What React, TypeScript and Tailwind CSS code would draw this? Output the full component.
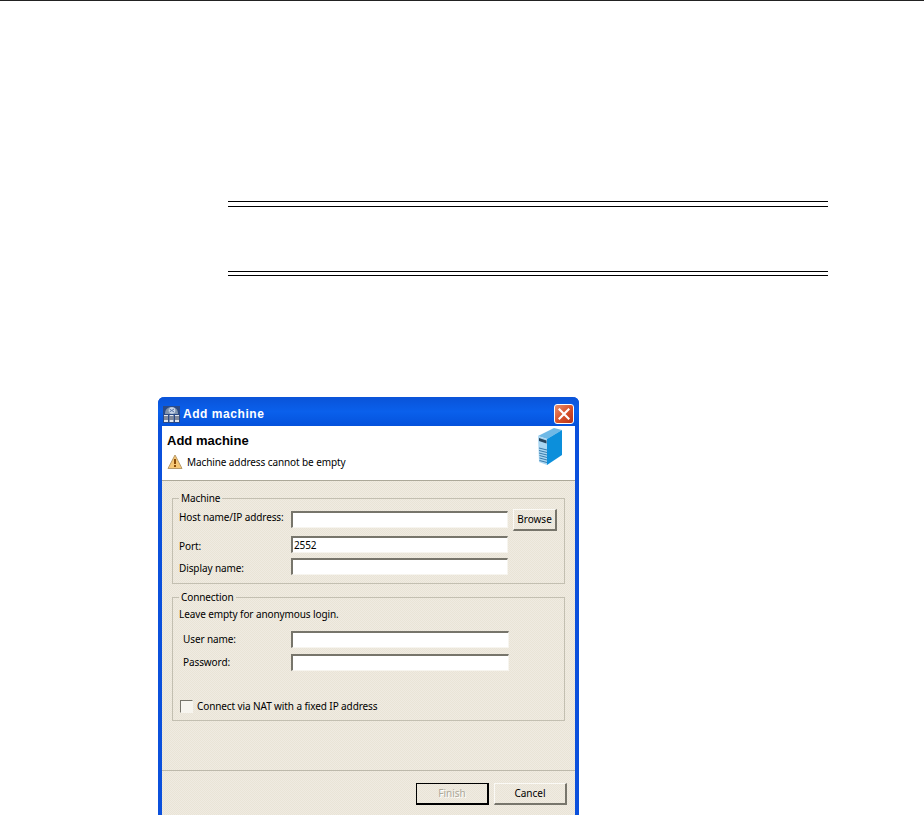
import React from "react";

const txt = "whitespace-nowrap text-[10px] tracking-[-0.1px] leading-[14px] text-black";

function AppIcon() {
  return (
    <svg width="17" height="17" viewBox="0 0 17 17">
      <rect x="0" y="0" width="17" height="17" fill="#2b4a86" />
      <path d="M2 8 C2 3 5 1 8.500 1 C12 1 15 3 15 8 Z" fill="#7f93ad" />
      <circle cx="9" cy="4.500" r="3.300" fill="#c9d6ea" />
      <path d="M6.500 3 L11 6 M11 3 L6.500 6" stroke="#5a76a8" strokeWidth="1" />
      <rect x="1" y="9" width="4" height="7" fill="#e4e8ef" />
      <rect x="6.500" y="9" width="4" height="7" fill="#e4e8ef" />
      <rect x="12" y="9" width="4" height="7" fill="#e4e8ef" />
      <path d="M1 11 H5 M1 13 H5 M6.500 11 H10.500 M6.500 13 H10.500 M12 11 H16 M12 13 H16" stroke="#1f2a44" strokeWidth="1" />
    </svg>
  );
}

function CloseIcon() {
  return (
    <div className="flex h-[20px] w-[20px] items-center justify-center rounded-[3px] border border-white bg-gradient-to-br from-[#e8906f] via-[#d9532b] to-[#b5321a]">
      <svg width="12" height="12" viewBox="0 0 12 12">
        <path d="M1.500 1.500 L10.500 10.500 M10.500 1.500 L1.500 10.500" stroke="#ffffff" strokeWidth="2.200" strokeLinecap="square" />
      </svg>
    </div>
  );
}

function WarningIcon() {
  return (
    <svg width="16" height="16" viewBox="0 0 16 16">
      <path d="M8 1 L15 14.500 H1 Z" fill="#f6c877" stroke="#b79a6a" strokeWidth="1" strokeLinejoin="round" />
      <path d="M8 5 V10" stroke="#8a4b08" strokeWidth="2" />
      <rect x="7" y="11" width="2" height="2" fill="#8a4b08" />
    </svg>
  );
}

function ServerIcon() {
  return (
    <svg width="25" height="37" viewBox="0 0 25 37">
      <path d="M0 8 L16 0 L24 2 L9 11 Z" fill="#6fb9e6" />
      <path d="M0 8 L9 11 L9 37 L1 34 Z" fill="#a9d6f2" />
      <path d="M9 11 L24 2 L24 27 L9 37 Z" fill="#0c8fdb" />
      <path d="M1 10 L8.500 12.500 L8.500 15.500 L1 13 Z" fill="#27465f" />
      <path d="M1 20 L9 22 M1 22.500 L9 24.500 M1 25 L9 27 M1.500 27.500 L9 29.500 M1.500 30 L9 32 M1.500 32.500 L9 34.500" stroke="#3a7cab" strokeWidth="1" />
    </svg>
  );
}

function Field({ value = "", className = "w-[217px]" }: { value?: string; className?: string }) {
  return (
    <div className={`box-border h-[17px] border-t-2 border-l-2 border-r border-b border-t-[#77756b] border-l-[#77756b] border-r-[#f7f5ef] border-b-[#f7f5ef] bg-white pl-px ${txt} ${className}`}>
      {value}
    </div>
  );
}

function Btn({ children, def }: { children: React.ReactNode; def?: boolean }) {
  return (
    <div
      className={`box-border flex h-[22px] w-[73px] items-center justify-center border text-[10px] ${
        def
          ? "border-black border-r-2 border-b-2 text-[#aca899] [text-shadow:1px_1px_0_#fff]"
          : "border-t-[#fbfaf6] border-l-[#fbfaf6] border-r-[#77756b] border-b-[#77756b] border-r-2 border-b-2 text-black"
      }`}
    >
      {children}
    </div>
  );
}

export default function App() {
  return (
    <div className="h-[815px] w-[924px] overflow-hidden bg-white font-['Noto_Sans','Liberation_Sans',Arial,sans-serif]">
      <div className="h-px bg-[#222222]" />

      <div className="ml-[228px] mt-[200px] w-[600px]">
        <div className="h-px bg-black" />
        <div className="mt-1 h-px bg-black" />
        <div className="mt-[64px] h-px bg-black" />
        <div className="mt-[3px] h-px bg-black" />
      </div>

      <div className="ml-[158px] mt-[121px] box-border h-[440px] w-[421px] rounded-t-[6px] border-x-[4px] border-[#0b50dc] border-t-0 bg-[#ece7dc] bg-[repeating-conic-gradient(#e9e4d6_0_25%,#f0ebe2_0_50%)] bg-[length:2px_2px]">
        <div className="-mx-[4px] box-border flex h-[29px] items-center rounded-t-[6px] bg-gradient-to-b from-[#0a53d8] via-[#0a60ec] to-[#0552dc] pl-[5px] pr-[5px] pt-[5px]">
          <AppIcon />
          <span className="ml-[3px] font-['Liberation_Sans',Arial,sans-serif] text-[12px] font-bold tracking-[0.55px] text-white">Add machine</span>
          <div className="ml-auto">
            <CloseIcon />
          </div>
        </div>

        <div className="relative box-border h-[55px] border-b border-b-[#aca899] bg-white pl-[5px] pt-[7px]">
          <div className="font-['Liberation_Sans',Arial,sans-serif] text-[13px] font-bold leading-[15px] text-black">Add machine</div>
          <div className="mt-[6px] flex items-center">
            <WarningIcon />
            <span className={`ml-[4px] ${txt}`}>Machine address cannot be empty</span>
          </div>
          <div className="absolute right-[12px] top-[2px]">
            <ServerIcon />
          </div>
        </div>

        <fieldset className="mx-[10px] mt-[10px] box-border h-[93px] w-[393px] border border-[#c3bfb1] pl-[6px]">
          <legend className={`px-[2px] ${txt} leading-[12px]`}>Machine</legend>
          <div className="mt-[6px] flex">
            <span className={`-mt-px w-[112px] ${txt}`}>Host name/IP address:</span>
            <Field />
            <div className="-mt-[2px] ml-[5px] box-border flex h-[22px] w-[44px] items-center justify-center border border-t-[#fbfaf6] border-l-[#fbfaf6] border-r-2 border-b-2 border-r-[#77756b] border-b-[#77756b] text-[10px] text-black">
              Browse
            </div>
          </div>
          <div className="mt-[5px] flex items-center">
            <span className={`w-[112px] translate-y-px ${txt}`}>Port:</span>
            <Field value="2552" />
          </div>
          <div className="mt-[5px] flex items-center">
            <span className={`w-[112px] translate-y-px ${txt}`}>Display name:</span>
            <Field />
          </div>
        </fieldset>

        <fieldset className="mx-[10px] mt-[6px] box-border h-[131px] w-[393px] border border-[#c3bfb1] pl-[6px]">
          <legend className={`px-[2px] ${txt} leading-[12px]`}>Connection</legend>
          <div className={`mt-[3px] ${txt}`}>Leave empty for anonymous login.</div>
          <div className="mt-[10px] flex items-center">
            <span className={`w-[112px] -translate-y-px pl-[4px] ${txt}`}>User name:</span>
            <Field className="w-[218px]" />
          </div>
          <div className="mt-[6px] flex items-center">
            <span className={`w-[112px] -translate-y-px pl-[4px] ${txt}`}>Password:</span>
            <Field className="w-[218px]" />
          </div>
          <div className="mt-[28px] flex items-center">
            <div className="ml-[1px] box-border h-[13px] w-[13px] border border-t-[#77756b] border-l-[#77756b] border-r-[#f7f5ef] border-b-[#f7f5ef] bg-[#f7f5ef]" />
            <span className={`ml-[4px] ${txt}`}>Connect via NAT with a fixed IP address</span>
          </div>
        </fieldset>

        <div className="mt-[49px] box-border flex justify-end gap-[5px] border-t border-t-[#bdb9ab] pr-[8px] pt-[12px]">
          <Btn def>Finish</Btn>
          <Btn>Cancel</Btn>
        </div>
      </div>
    </div>
  );
}
